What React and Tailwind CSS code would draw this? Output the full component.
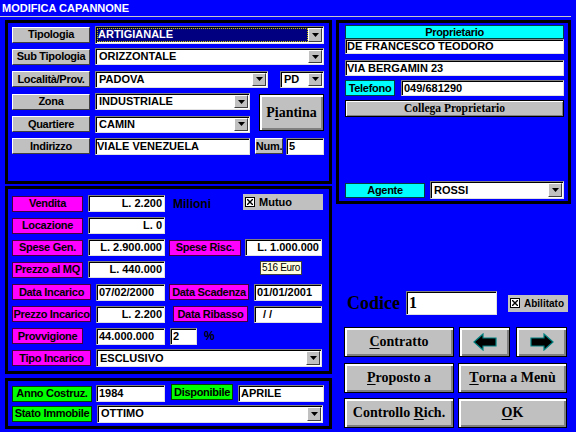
import React from "react";

const SANS = "font-['Liberation_Sans',Arial,sans-serif]";
const SERIF = "font-['Liberation_Serif','Times_New_Roman',serif]";

const SUNKEN =
  "bg-white border border-t-[#808080] border-l-[#808080] border-b-[#e0e0e0] border-r-[#e0e0e0] shadow-[inset_1px_1px_0_#000]";
const RAISED =
  "bg-[#c0c0c0] border border-black shadow-[inset_2px_2px_0_#fff,inset_-2px_-2px_0_#808080]";

const TONES = {
  gray: "bg-[#c0c0c0] border border-t-white border-l-white border-b-[#404040] border-r-[#404040]",
  pink: "bg-[#ff00ff] border border-[#400040]",
  cyan: "bg-[#00ffff] border border-[#004040]",
  green: "bg-[#00ff00] border border-[#004000]",
};

function Tag({ w, tone = "gray", h = "h-[16px]", className = "", children }) {
  return (
    <div
      className={`${TONES[tone]} ${w} ${h} shrink-0 flex items-center justify-center text-[11px] tracking-[-0.3px] font-bold leading-none text-black whitespace-nowrap overflow-hidden ${className}`}
    >
      {children}
    </div>
  );
}

function Field({ w, h = "h-[17px]", right, className = "", children }) {
  return (
    <div
      className={`${SUNKEN} ${w} ${h} shrink-0 flex items-center px-[2px] text-[11px] font-bold leading-none text-black whitespace-nowrap overflow-hidden ${right ? "justify-end" : ""} ${className}`}
    >
      {children}
    </div>
  );
}

function DropBtn() {
  return (
    <div className="w-[14px] shrink-0 bg-[#c0c0c0] border border-t-white border-l-white border-b-[#404040] border-r-[#404040] flex items-center justify-center">
      <svg width="7" height="4" viewBox="0 0 7 4">
        <polygon points="0,0 7,0 3.5,4" fill="#000" />
      </svg>
    </div>
  );
}

function Combo({ w, h = "h-[17px]", selected, className = "", children }) {
  return (
    <div className={`${SUNKEN} ${w} ${h} shrink-0 flex items-stretch p-[1px] ${className}`}>
      <div className="flex-1 flex items-center overflow-hidden text-[11px] font-bold leading-none text-black whitespace-nowrap">
        {selected ? (
          <span className="flex-1 h-full flex items-center px-[1px] bg-[#000080] text-white outline outline-1 outline-dotted outline-[#c8c800] -outline-offset-1">
            {children}
          </span>
        ) : (
          <span className="px-[2px]">{children}</span>
        )}
      </div>
      <DropBtn />
    </div>
  );
}

function Check({ children }) {
  return (
    <span className="flex items-center gap-[4px]">
      <span className="w-[10px] h-[10px] bg-white border border-black flex items-center justify-center">
        <svg width="6" height="6" viewBox="0 0 6 6">
          <path d="M0 0L6 6M6 0L0 6" stroke="#000" strokeWidth="1.4" />
        </svg>
      </span>
      {children}
    </span>
  );
}

function Btn({ className = "", children }) {
  return (
    <button
      className={`${RAISED} ${SERIF} flex items-center justify-center font-bold text-[14px] text-black leading-none ${className}`}
    >
      {children}
    </button>
  );
}

function Arrow({ left }) {
  return (
    <svg width="24" height="18" viewBox="0 0 24 18" className={left ? "" : "-scale-x-100"}>
      <polygon
        points="1,9 10,1 10,5 23,5 23,13 10,13 10,17"
        fill="#000"
        stroke="#008080"
        strokeWidth="1.2"
        strokeLinejoin="miter"
      />
    </svg>
  );
}

function Panel({ className = "", children }) {
  return <section className={`border-[3px] border-black ${className}`}>{children}</section>;
}

export default function App() {
  return (
    <div className={`w-[576px] h-[432px] bg-[#0000ff] overflow-hidden ${SANS}`}>
      {/* title */}
      <div className="h-[17px] mr-[5px] border-b border-[#c8c8c8] pl-[2px] pt-[1px] text-white font-bold text-[11px] leading-[14px]">
        MODIFICA CAPANNONE
      </div>

      <div className="flex gap-[4px] px-[5px] pt-[3px]">
        {/* left column */}
        <div className="w-[327px] flex flex-col">
          <Panel className="h-[164px] pl-[4px] pt-[3px] flex flex-col gap-[5.4px]">
            <div className="flex items-center h-[17px]">
              <Tag w="w-[78px]">Tipologia</Tag>
              <Combo w="w-[229px]" h="h-[18px]" selected className="ml-[5px]">
                ARTIGIANALE
              </Combo>
            </div>
            <div className="flex items-center h-[17px]">
              <Tag w="w-[78px]">Sub Tipologia</Tag>
              <Combo w="w-[229px]" className="ml-[5px]">ORIZZONTALE</Combo>
            </div>
            <div className="flex items-center h-[17px]">
              <Tag w="w-[78px]">Località/Prov.</Tag>
              <Combo w="w-[173px]" className="ml-[5px]">PADOVA</Combo>
              <Combo w="w-[44px]" className="ml-[12px]">PD</Combo>
            </div>
            <div className="flex items-start">
              <div className="flex flex-col gap-[5.4px]">
                <div className="flex items-center h-[17px]">
                  <Tag w="w-[78px]">Zona</Tag>
                  <Combo w="w-[155px]" className="ml-[5px]">INDUSTRIALE</Combo>
                </div>
                <div className="flex items-center h-[17px]">
                  <Tag w="w-[78px]">Quartiere</Tag>
                  <Combo w="w-[155px]" className="ml-[5px]">CAMIN</Combo>
                </div>
              </div>
              <Btn className="w-[65px] h-[37px] ml-[9px] mt-[1px]">
                P<span className="underline underline-offset-2">i</span>antina
              </Btn>
            </div>
            <div className="flex items-center h-[17px]">
              <Tag w="w-[78px]">Indirizzo</Tag>
              <Field w="w-[155px]" className="ml-[5px] !px-[1px]">VIALE VENEZUELA</Field>
              <Tag w="w-[28px]" className="ml-[5px]">Num.</Tag>
              <Field w="w-[38px]" className="ml-[3px]">5</Field>
            </div>
          </Panel>

          <Panel className="h-[188px] mt-[2px] pl-[4px] pt-[6px] flex flex-col gap-[5.15px]">
            <div className="flex items-center h-[17px]">
              <Tag tone="pink" w="w-[71px]">Vendita</Tag>
              <Field w="w-[77px]" right className="ml-[5px]">L. 2.200</Field>
              <span className="w-[78px] pl-[8px] text-[12px] font-bold text-black">Milioni</span>
              <div className="w-[80px] h-[16px] -mt-[3px] bg-[#c0c0c0] pl-[2px] flex items-center text-[11px] font-bold text-black">
                <Check>Mutuo</Check>
              </div>
            </div>
            <div className="flex items-center h-[17px]">
              <Tag tone="pink" w="w-[71px]">Locazione</Tag>
              <Field w="w-[77px]" right className="ml-[5px]">L. 0</Field>
            </div>
            <div className="flex items-center h-[17px]">
              <Tag tone="pink" w="w-[71px]">Spese Gen.</Tag>
              <Field w="w-[77px]" right className="ml-[5px]">L. 2.900.000</Field>
              <Tag tone="pink" w="w-[72px]" className="ml-[4px]">Spese Risc.</Tag>
              <Field w="w-[77px]" right className="ml-[4px]">L. 1.000.000</Field>
            </div>
            <div className="flex items-center h-[17px]">
              <Tag tone="pink" w="w-[71px]">Prezzo al MQ</Tag>
              <Field w="w-[77px]" right className="ml-[5px]">L. 440.000</Field>
              <div className="w-[42px] h-[14px] ml-[95px] -mt-[4px] bg-[#ffffe0] border border-[#404040] flex items-center justify-center text-[10px] tracking-[-0.3px] text-black leading-none">
                516 Euro
              </div>
            </div>
            <div className="flex items-center h-[17px]">
              <Tag tone="pink" w="w-[79px]">Data Incarico</Tag>
              <Field w="w-[69px]" className="ml-[5px]">07/02/2000</Field>
              <Tag tone="pink" w="w-[80px]" className="ml-[4px]">Data Scadenza</Tag>
              <Field w="w-[68px]" className="ml-[5px]">01/01/2001</Field>
            </div>
            <div className="flex items-center h-[17px]">
              <Tag tone="pink" w="w-[79px]">Prezzo Incarico</Tag>
              <Field w="w-[69px]" right className="ml-[5px]">L. 2.200</Field>
              <Tag tone="pink" w="w-[75px]" className="ml-[8px]">Data Ribasso</Tag>
              <Field w="w-[68px]" className="ml-[6px] !pl-[8px]">/ /</Field>
            </div>
            <div className="flex items-center h-[17px]">
              <Tag tone="pink" w="w-[71px]">Provvigione</Tag>
              <Field w="w-[69px]" className="ml-[13px]">44.000.000</Field>
              <Field w="w-[27px]" className="ml-[5px]">2</Field>
              <span className="ml-[7px] text-[12px] font-bold text-black">%</span>
            </div>
            <div className="flex items-center h-[17px]">
              <Tag tone="pink" w="w-[79px]">Tipo Incarico</Tag>
              <Combo w="w-[226px]" h="h-[18px]" className="ml-[5px]">ESCLUSIVO</Combo>
            </div>
          </Panel>

          <Panel className="h-[51px] mt-[4px] pl-[4px] pt-[4px] flex flex-col gap-[3px]">
            <div className="flex items-center h-[17px]">
              <Tag tone="green" w="w-[80px]">Anno Costruz.</Tag>
              <Field w="w-[69px]" className="ml-[4px]">1984</Field>
              <Tag tone="green" w="w-[62px]" className="ml-[6px] -mt-[3px]">Disponibile</Tag>
              <Field w="w-[86px]" className="ml-[5px]">APRILE</Field>
            </div>
            <div className="flex items-center h-[17px]">
              <Tag tone="green" w="w-[80px]">Stato Immobile</Tag>
              <Combo w="w-[226px]" h="h-[18px]" className="ml-[5px]">OTTIMO</Combo>
            </div>
          </Panel>
        </div>

        {/* right column */}
        <div className="w-[235px] flex flex-col">
          <Panel className="h-[184px] pl-[6px] pr-[4px] pt-[2px] pb-[2px] flex flex-col">
            <Tag tone="cyan" w="w-full" h="h-[14px]">Proprietario</Tag>
            <Field w="w-full" h="h-[15px]" className="!px-[1px]">DE FRANCESCO TEODORO</Field>
            <Field w="w-full" h="h-[16px]" className="mt-[6px] !px-[1px]">VIA BERGAMIN 23</Field>
            <div className="flex items-center mt-[4px]">
              <Tag tone="cyan" w="w-[50px]">Telefono</Tag>
              <Field w="w-[163px]" h="h-[16px]" className="ml-[6px]">049/681290</Field>
            </div>
            <Btn className="w-full h-[17px] mt-[4px] !text-[11.5px] !shadow-[inset_1px_1px_0_#fff,inset_-1px_-1px_0_#808080]">
              Collega Proprietario
            </Btn>
            <div className="flex items-center mt-auto">
              <Tag tone="cyan" w="w-[80px]" h="h-[15px]">Agente</Tag>
              <Combo w="w-[134px]" h="h-[18px]" className="ml-[5px]">ROSSI</Combo>
            </div>
          </Panel>

          <div className="flex items-center mt-[87px] pl-[11px]">
            <span className={`${SERIF} w-[59px] text-[18px] font-bold text-black leading-none`}>Codice</span>
            <div className={`${SUNKEN} ${SERIF} w-[91px] h-[24px] flex items-center px-[2px] text-[16px] font-bold text-black`}>
              1
            </div>
            <div className="w-[60px] h-[17px] ml-[11px] bg-[#c0c0c0] pl-[2px] flex items-center text-[10px] font-bold text-black">
              <Check>Abilitato</Check>
            </div>
          </div>

          <div className="grid grid-cols-[110px_109px] gap-x-[4px] gap-y-[5.5px] mt-[12px] pl-[8px]">
            <Btn className="h-[30px]">
              <span className="underline underline-offset-2">C</span>ontratto
            </Btn>
            <div className="flex gap-[6px] pl-[1px]">
              <Btn className="flex-1 h-[30px]">
                <Arrow left />
              </Btn>
              <Btn className="flex-1 h-[30px]">
                <Arrow />
              </Btn>
            </div>
            <Btn className="h-[30px]">
              <span className="underline underline-offset-2">P</span>roposto a
            </Btn>
            <Btn className="h-[30px]">
              <span className="underline underline-offset-2">T</span>orna a Menù
            </Btn>
            <Btn className="h-[30px]">
              Controllo&nbsp;<span className="underline underline-offset-2">R</span>ich.
            </Btn>
            <Btn className="h-[30px]">
              <span className="underline underline-offset-2">O</span>K
            </Btn>
          </div>
        </div>
      </div>
    </div>
  );
}
